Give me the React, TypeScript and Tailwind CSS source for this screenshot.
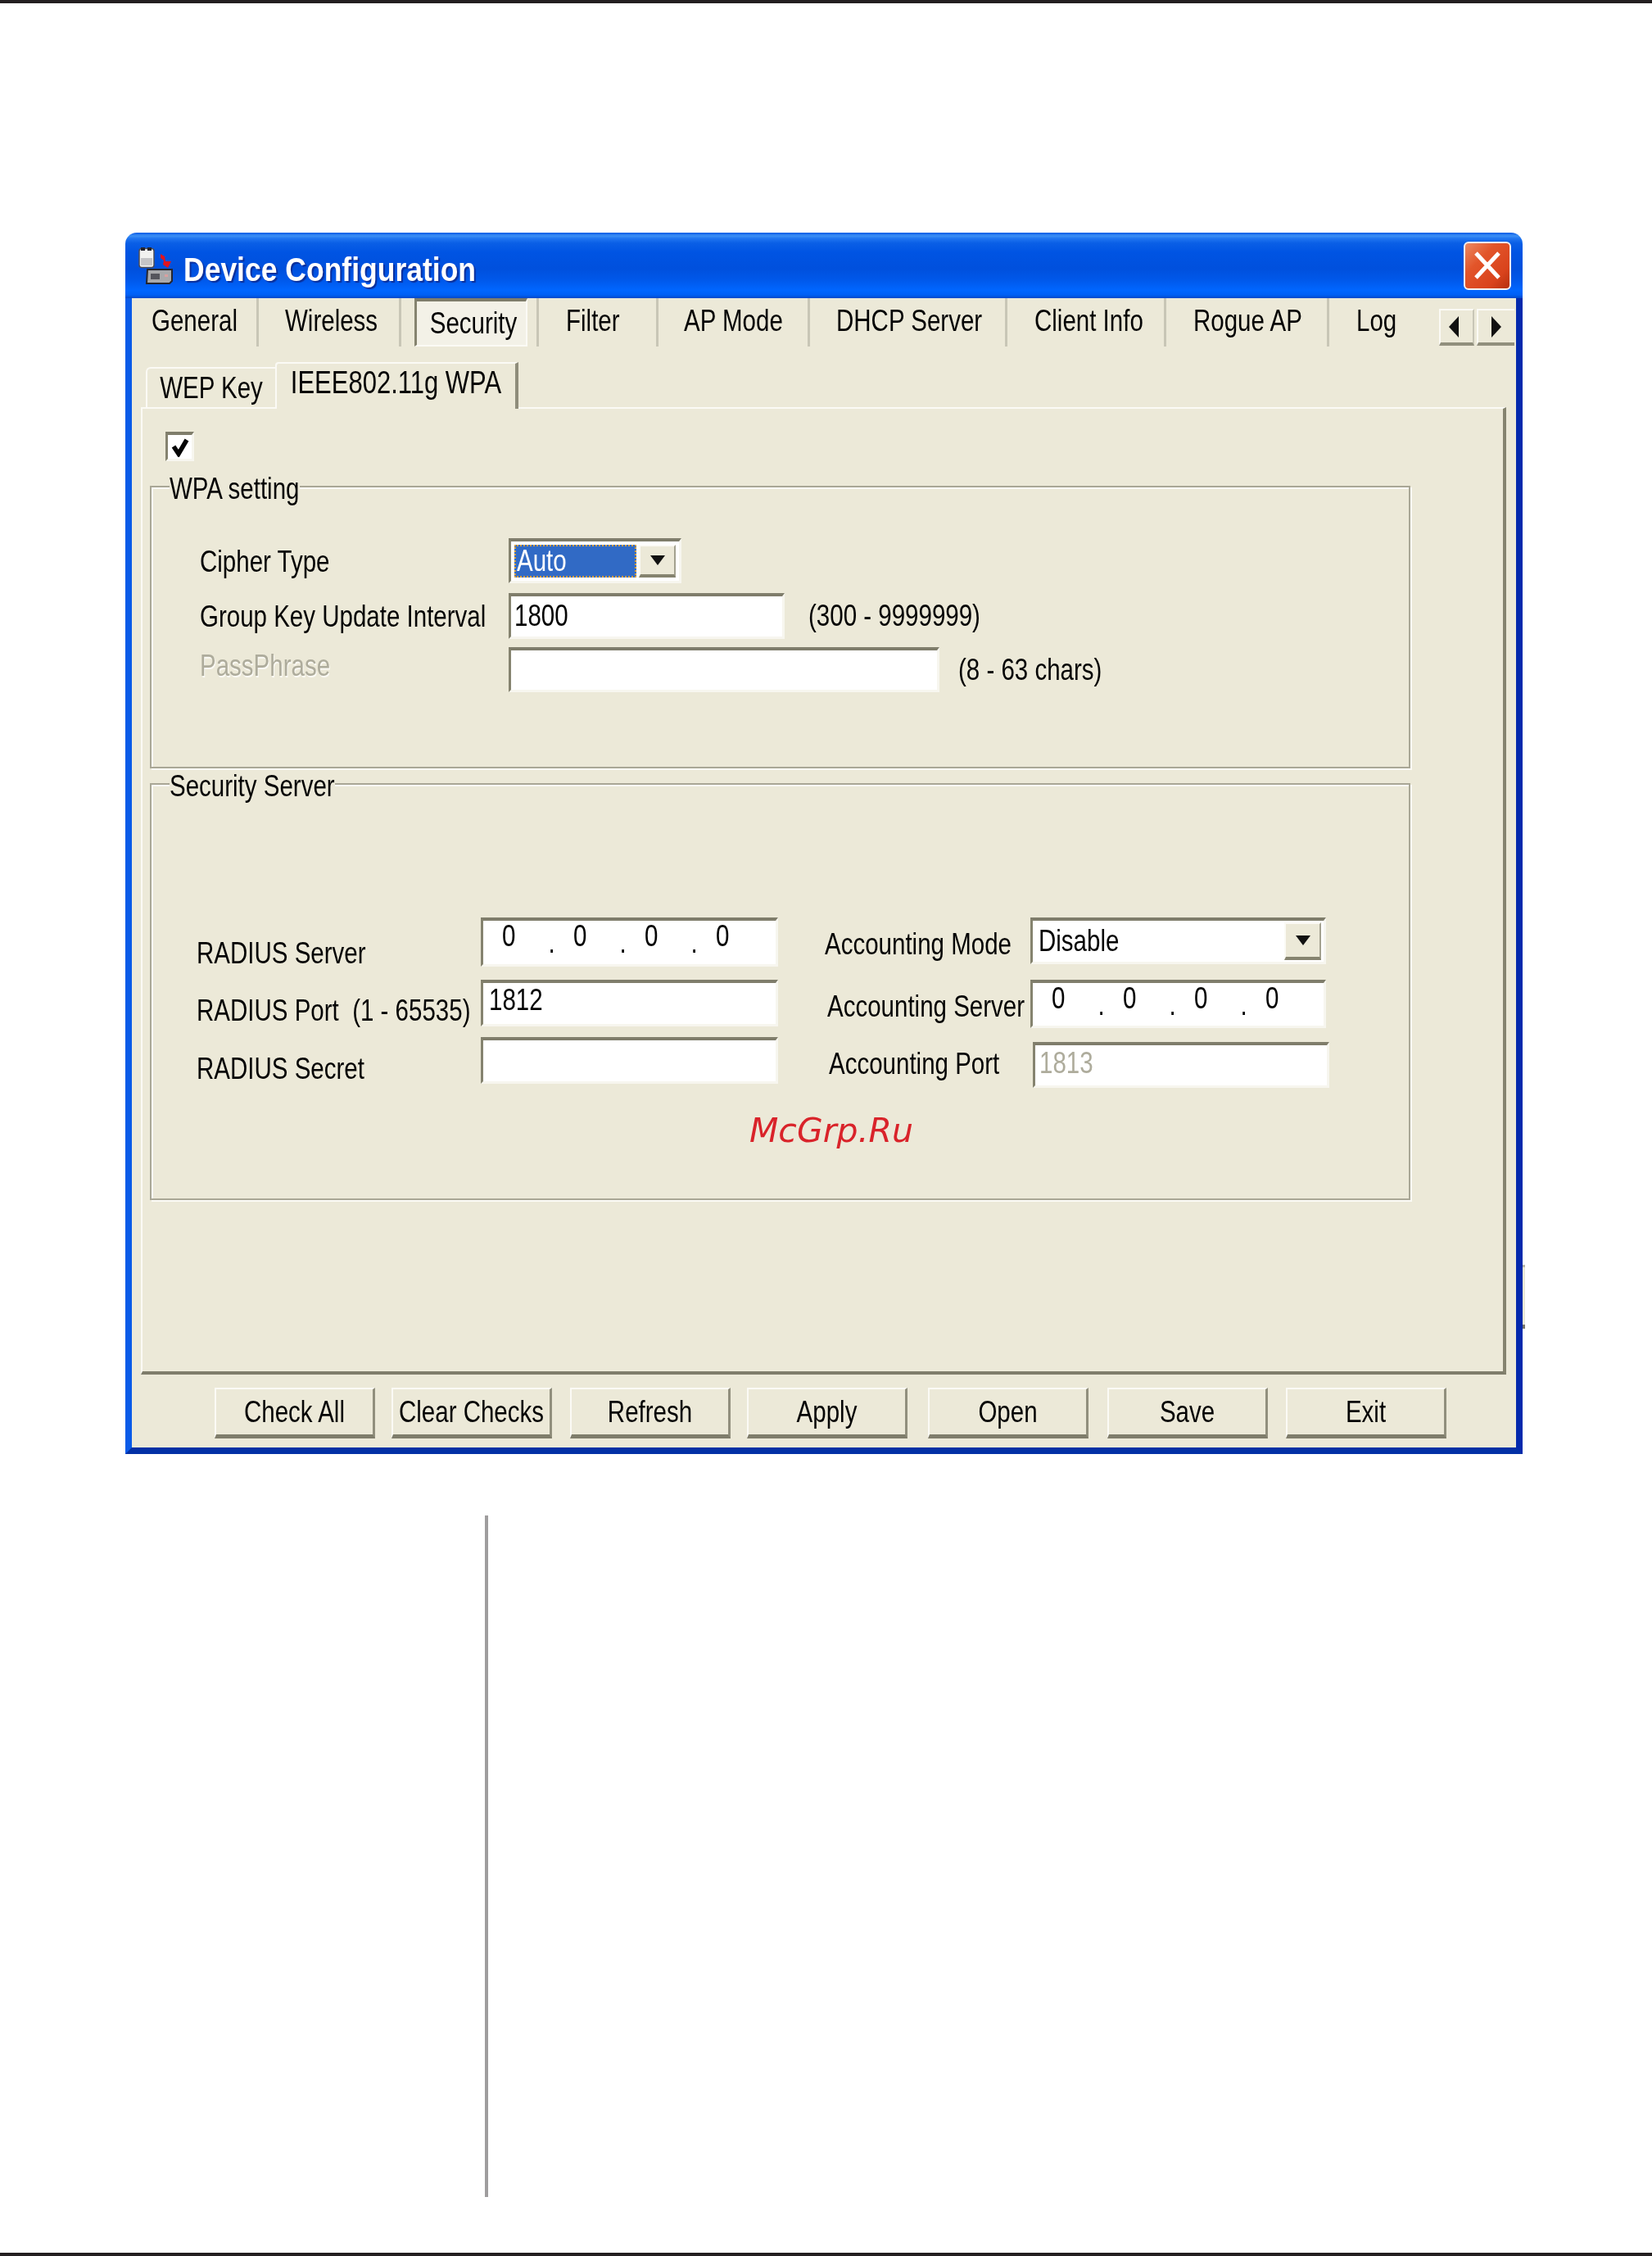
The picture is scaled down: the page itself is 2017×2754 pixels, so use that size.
import type { ReactNode } from "react"

const sans = "font-['Liberation_Sans',Arial,sans-serif]"

function Txt({ children, className = "" }: { children: ReactNode; className?: string }) {
  return (
    <span className={`block whitespace-pre text-[29.5px] leading-[30px] scale-y-[1.24] text-[#050505] ${className}`}>
      {children}
    </span>
  )
}

function Sunken({ className = "", children }: { className?: string; children?: ReactNode }) {
  return (
    <div className={`flex border-t-[4px] border-l-[3px] border-r-[3px] border-b-[3px] border-t-[#7f7d6b] border-l-[#85836f] border-r-[#f7f6ef] border-b-[#f7f6ef] bg-white ${className}`}>
      {children}
    </div>
  )
}

function Arrow({ className = "" }: { className?: string }) {
  return (
    <svg width="18" height="12" viewBox="0 0 18 12" className={className}>
      <polygon points="0,0 18,0 9,12" fill="#111" />
    </svg>
  )
}

function DropButton() {
  return (
    <div className="flex w-[45px] shrink-0 items-center justify-center border-t-2 border-l-2 border-r-2 border-b-4 border-t-[#fbfaf5] border-l-[#fbfaf5] border-r-[#a3a18f] border-b-[#85836f] bg-[#ece9d8]">
      <Arrow />
    </div>
  )
}

function IpField({ className = "" }: { className?: string }) {
  return (
    <Sunken className={className}>
      <div className="flex pt-[6px] pl-[23px]">
        {[0, 1, 2, 3].map((i) => (
          <div key={i} className="flex w-[87px]">
            <Txt>0</Txt>
            {i < 3 && <Txt className="mt-[7px] ml-[40px]">.</Txt>}
          </div>
        ))}
      </div>
    </Sunken>
  )
}

function Group({ title, className = "", children }: { title: string; className?: string; children: ReactNode }) {
  return (
    <div className={`relative ml-[9px] w-[1539px] border-2 border-[#a9a796] shadow-[2px_2px_0_#fbfaf5,inset_2px_2px_0_#fbfaf5] ${className}`}>
      <span className="absolute -top-[13px] left-[22px] bg-[#ece9d8]">
        <Txt>{title}</Txt>
      </span>
      {children}
    </div>
  )
}

const tabs = [
  { label: "General", w: "w-[155px]", pl: "pl-[24px]" },
  { label: "Wireless", w: "w-[174px]", pl: "pl-[32px]" },
  { label: "Security", w: "w-[168px]", pl: "pl-[16px]", focused: true },
  { label: "Filter", w: "w-[146px]", pl: "pl-[33px]" },
  { label: "AP Mode", w: "w-[185px]", pl: "pl-[31px]" },
  { label: "DHCP Server", w: "w-[241px]", pl: "pl-[32px]" },
  { label: "Client Info", w: "w-[194px]", pl: "pl-[33px]" },
  { label: "Rogue AP", w: "w-[199px]", pl: "pl-[33px]" },
  { label: "Log", w: "w-[134px]", pl: "pl-[33px]", last: true },
]

const buttons = [
  { label: "Check All", ml: "ml-[101px]" },
  { label: "Clear Checks", ml: "ml-[20px]" },
  { label: "Refresh", ml: "ml-[22px]" },
  { label: "Apply", ml: "ml-[20px]" },
  { label: "Open", ml: "ml-[25px]" },
  { label: "Save", ml: "ml-[23px]" },
  { label: "Exit", ml: "ml-[22px]" },
]

function TitleIcon() {
  return (
    <svg width="42" height="45" viewBox="0 0 42 45" className="shrink-0">
      <rect x="1" y="1.5" width="18" height="23" rx="3" fill="#f2f2f0" stroke="#4c4c55" strokeWidth="1.5" />
      <rect x="3" y="0" width="5" height="4" fill="#23232b" />
      <rect x="11" y="0" width="5" height="4" fill="#23232b" />
      <rect x="3" y="13" width="14" height="9" fill="#c4c4c6" />
      <path d="M27 8 L32 11 L33 17 L40 17 L36 25 L30 21 L31 16 L27 13 Z" fill="#e0141e" />
      <path d="M11 27 L41 27 L41 41 L38 44 L10 44 Z" fill="#a9a9ab" stroke="#26262e" strokeWidth="2" />
      <rect x="15" y="32" width="11" height="7" fill="#55555c" />
      <rect x="32" y="33" width="4" height="3" fill="#d9a0a0" />
    </svg>
  )
}

export default function App() {
  return (
    <div className={`relative h-[2754px] w-[2017px] bg-white ${sans}`}>
      <div className="h-[4px] bg-[#231f20]" />

      {/* Window */}
      <div className="relative mt-[280px] ml-[153px] flex h-[1491px] w-[1706px] flex-col overflow-hidden rounded-t-[14px] blur-[0.6px]">
        {/* Title bar */}
        <div className="flex h-[80px] shrink-0 items-center bg-[linear-gradient(180deg,#0a5ae6_0%,#3b8ff5_5%,#1f74f0_9%,#0a5fe6_16%,#0054e3_30%,#0050dd_55%,#0058ea_72%,#0066ff_88%,#0060f5_95%,#0048c8_100%)] pl-[16px]">
          <TitleIcon />
          <span className="mt-[10px] ml-[13px] block scale-y-[1.14] whitespace-pre text-[35.5px] leading-[40px] font-bold text-white [text-shadow:2px_2px_1px_#0b2f9a]">
            Device Configuration
          </span>
          <div className="mr-[14px] ml-auto flex h-[59px] w-[58px] items-center justify-center rounded-[6px] border-2 border-[#f4f1ee] bg-[linear-gradient(135deg,#ec8a63_0%,#e2552a_35%,#d9431c_75%,#b5300f_100%)]">
            <svg width="34" height="36" viewBox="0 0 34 36">
              <path d="M3 3 L31 33 M31 3 L3 33" stroke="#fff" strokeWidth="5" />
            </svg>
          </div>
        </div>

        {/* Client area */}
        <div className="flex min-h-0 flex-1 flex-col border-r-[8px] border-b-[8px] border-l-[8px] border-r-[#0329ad] border-b-[#0230a5] border-l-[#0a5be8] bg-[#ece9d8]">
          {/* Main tabs */}
          <div className="flex h-[59px] shrink-0">
            {tabs.map((t) => (
              <div key={t.label} className={`${t.w} flex h-full shrink-0 items-center ${t.pl} ${t.last ? "" : "border-r-[3px] border-[#c8c6b6]"}`}>
                {t.focused ? (
                  <div className="flex h-full w-[138px] items-center justify-center border-t-[4px] border-l-[3px] border-r-[2px] border-b-[2px] border-t-[#7f7d6b] border-l-[#85836f] border-r-[#fbfaf5] border-b-[#fbfaf5] bg-[#f3f1e7] pl-[5px]">
                    <Txt>{t.label}</Txt>
                  </div>
                ) : (
                  <Txt className="mb-[4px]">{t.label}</Txt>
                )}
              </div>
            ))}
            <div className="mt-[13px] flex h-[45px] w-[43px] items-center justify-center border-t-2 border-l-2 border-r-2 border-b-[4px] border-t-[#fbfaf5] border-l-[#fbfaf5] border-r-[#c8c6b6] border-b-[#918f7d] bg-[#ece9d8] pr-[8px]">
              <svg width="12" height="26" viewBox="0 0 12 26"><polygon points="12,0 12,26 0,13" fill="#111" /></svg>
            </div>
            <div className="mt-[13px] ml-[3px] flex h-[45px] w-[46px] items-center justify-center border-t-2 border-l-2 border-b-[4px] border-t-[#fbfaf5] border-l-[#fbfaf5] border-b-[#918f7d] bg-[#ece9d8]">
              <svg width="12" height="26" viewBox="0 0 12 26"><polygon points="0,0 0,26 12,13" fill="#111" /></svg>
            </div>
          </div>

          {/* Sub tabs */}
          <div className="relative z-10 -mb-[2px] mt-[19px] ml-[17px] flex h-[57px] shrink-0 items-end">
            <div className="flex h-[51px] w-[158px] items-center justify-center rounded-tl-[6px] border-t-2 border-l-2 border-[#fbfaf5] pb-[1px]">
              <Txt>WEP Key</Txt>
            </div>
            <div className="flex h-[57px] w-[297px] items-start justify-center rounded-tl-[4px] border-t-2 border-l-2 border-r-[4px] border-t-[#fbfaf5] border-l-[#fbfaf5] border-r-[#8f8d7b] bg-[#ece9d8] pt-[9px]">
              <Txt className="text-[31px]">IEEE802.11g WPA</Txt>
            </div>
          </div>

          {/* Panel */}
          <div className="ml-[11px] flex h-[1181px] w-[1667px] shrink-0 flex-col border-t-2 border-l-2 border-r-[4px] border-b-[4px] border-t-[#fbfaf5] border-l-[#fbfaf5] border-r-[#85836f] border-b-[#7f7d6b]">
            <Sunken className="mt-[28px] ml-[28px] h-[36px] w-[35px] shrink-0 items-center justify-center">
              <svg width="22" height="24" viewBox="0 0 22 24">
                <path d="M3 11 L9 20 L19 3" fill="none" stroke="#050505" strokeWidth="5.5" />
              </svg>
            </Sunken>

            {/* WPA setting */}
            <Group title="WPA setting" className="mt-[30px] h-[345px]">
              <div className="flex flex-col pt-[62px] pl-[59px]">
                <div className="flex h-[55px] items-center">
                  <div className="mt-[2px] w-[377px]"><Txt>Cipher Type</Txt></div>
                  <Sunken className="h-[55px] w-[211px] p-[4px]">
                    <div className="flex h-full w-[151px] items-center border-2 border-dotted border-[#d8a040] bg-[#316ac5] pl-[1px]">
                      <Txt className="text-white">Auto</Txt>
                    </div>
                    <div className="ml-[3px] flex"><DropButton /></div>
                  </Sunken>
                </div>
                <div className="mt-[12px] flex h-[56px] items-center">
                  <div className="mt-[2px] w-[377px]"><Txt>Group Key Update Interval</Txt></div>
                  <Sunken className="h-[56px] w-[337px] items-center pb-[2px] pl-[4px]"><Txt>1800</Txt></Sunken>
                  <Txt className="ml-[29px]">(300 - 9999999)</Txt>
                </div>
                <div className="mt-[10px] flex h-[55px] items-center">
                  <div className="mb-[10px] w-[377px]">
                    <Txt className="text-[#aeac9c] [text-shadow:1px_1px_0_#fbfaf5]">PassPhrase</Txt>
                  </div>
                  <Sunken className="h-[55px] w-[526px]" />
                  <Txt className="ml-[23px]">(8 - 63 chars)</Txt>
                </div>
              </div>
            </Group>

            {/* Security Server */}
            <Group title="Security Server" className="mt-[18px] h-[509px]">
              <div className="relative flex pt-[162px] pl-[55px]">
                <div className="flex flex-col">
                  <div className="flex h-[60px]">
                    <div className="mt-[29px] w-[347px]"><Txt>RADIUS Server</Txt></div>
                    <IpField className="h-[60px] w-[363px]" />
                  </div>
                  <div className="mt-[16px] flex h-[57px]">
                    <div className="mt-[23px] w-[347px]"><Txt>RADIUS Port  (1 - 65535)</Txt></div>
                    <Sunken className="h-[57px] w-[363px] pt-[7px] pl-[7px]"><Txt>1812</Txt></Sunken>
                  </div>
                  <div className="mt-[13px] flex h-[57px]">
                    <div className="mt-[24px] w-[347px]"><Txt>RADIUS Secret</Txt></div>
                    <Sunken className="h-[57px] w-[363px]" />
                  </div>
                </div>
                <div className="ml-[57px] flex flex-col">
                  <div className="flex h-[57px] items-center">
                    <div className="mt-[8px] w-[251px]"><Txt>Accounting Mode</Txt></div>
                    <Sunken className="h-[57px] w-[361px]">
                      <div className="flex flex-1 items-center pl-[7px]"><Txt>Disable</Txt></div>
                      <div className="my-[2px] mr-[3px] flex"><DropButton /></div>
                    </Sunken>
                  </div>
                  <div className="mt-[19px] flex h-[59px] items-center">
                    <div className="mt-[6px] w-[251px] pl-[3px]"><Txt>Accounting Server</Txt></div>
                    <IpField className="h-[59px] w-[361px]" />
                  </div>
                  <div className="mt-[17px] flex h-[56px] items-center">
                    <div className="mb-[2px] w-[254px] pl-[5px]"><Txt>Accounting Port</Txt></div>
                    <Sunken className="h-[56px] w-[362px] items-center pb-[6px] pl-[5px]">
                      <Txt className="text-[#aeac9c]">1813</Txt>
                    </Sunken>
                  </div>
                </div>
                {/* watermark */}
                <span className="absolute top-[398px] left-[730px] whitespace-pre font-['DejaVu_Sans',sans-serif] text-[41px] leading-[48px] text-[#d9232a] italic">
                  McGrp.Ru
                </span>
              </div>
            </Group>
          </div>

          {/* Bottom buttons */}
          <div className="mt-[16px] flex shrink-0">
            {buttons.map((b) => (
              <div key={b.label} className={`${b.ml} flex h-[62px] w-[196px] items-center justify-center border-t-2 border-l-2 border-r-[3px] border-b-[5px] border-t-[#fbfaf5] border-l-[#fbfaf5] border-r-[#918f7d] border-b-[#7f7d6b] bg-[#ece9d8]`}>
                <Txt>{b.label}</Txt>
              </div>
            ))}
          </div>
        </div>
      </div>

      {/* scan artefact right of the window */}
      <div className="absolute top-[1544px] left-[1859px] h-[78px] w-[3px] border-t-[3px] border-b-[5px] border-t-[#b9b7a8] border-b-[#77756a] bg-[#ebe8d7]" />

      {/* Divider below the screenshot */}
      <div className="mt-[75px] ml-[592px] h-[832px] w-[4px] bg-[#9f9d9e]" />
      <div className="mt-[68px] h-[4px] bg-[#231f20]" />
    </div>
  )
}
